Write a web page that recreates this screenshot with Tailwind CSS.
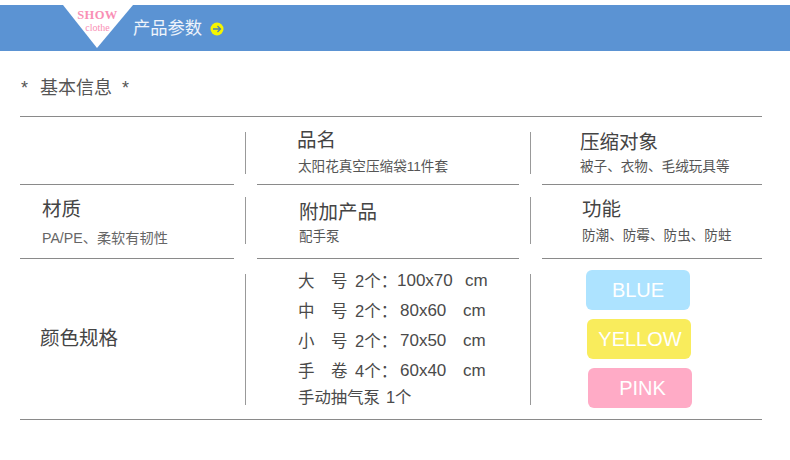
<!DOCTYPE html>
<html lang="zh-CN">
<head>
  <meta charset="UTF-8" />
  <meta name="viewport" content="width=device-width, initial-scale=1.0" />
  <title>产品参数</title>
  <script src="https://cdn.jsdelivr.net/npm/@tailwindcss/browser@4"></script>
</head>
<body class="bg-white text-[#444] overflow-hidden font-['Liberation_Sans','Noto_Sans_CJK_SC',sans-serif]">

  <!-- Header band -->
  <header class="relative mt-[5px] h-[46px] bg-[#5b93d3] flex items-center pl-[133px] gap-[8px]">
    <div class="absolute left-[63px] top-0 w-[70px] h-[44px]">
      <svg class="absolute inset-0" width="70" height="44" viewBox="0 0 70 44"><polygon points="0,0 70,0 34,43" fill="#fff" /></svg>
      <div class="relative text-center pr-[1px] font-['Liberation_Serif',serif] text-[#f98fb5] leading-none">
        <div class="pt-[4px] text-[12.5px] font-bold tracking-[0.4px]">SHOW</div>
        <div class="mt-[1px] text-[10px]">clothe</div>
      </div>
    </div>
    <span class="pt-[2px] text-[17.3px] leading-none text-white/90">产品参数</span>
    <svg class="mt-[1px]" width="14" height="14" viewBox="0 0 14 14">
      <circle cx="7" cy="7" r="6.5" fill="#f5f500" />
      <path d="M3 7h7.5M7.5 4l3 3-3 3" fill="none" stroke="#4f7fb0" stroke-width="1.3" />
    </svg>
  </header>

  <!-- Section title -->
  <h1 class="h-[65px] pl-[21px] pt-[26px] flex text-[18px] leading-[22px] font-normal text-[#555]">
    <span class="w-[19px]">*</span><span class="w-[82px]">基本信息</span><span>*</span>
  </h1>

  <main class="ml-[20px] w-[742px]">
    <div class="h-px bg-[#8a8a8a]"></div>

    <!-- Row 1 -->
    <div class="flex h-[67px] pt-[15px]">
      <div class="w-[225px]"></div>
      <div class="w-px h-[42px] bg-[#999]"></div>
      <div class="w-[284px] pl-[52px]">
        <div class="-ml-[1px] text-[19.5px] leading-[16px]">品名</div>
        <div class="mt-[10px] text-[13.6px] leading-[18px] text-[#555]">太阳花真空压缩袋11件套</div>
      </div>
      <div class="w-px h-[42px] bg-[#999]"></div>
      <div class="pl-[49px]">
        <div class="text-[19.5px] leading-[20px]">压缩对象</div>
        <div class="mt-[6px] text-[13.6px] leading-[18px] text-[#555]">被子、衣物、毛绒玩具等</div>
      </div>
    </div>
    <div class="flex justify-between h-px">
      <div class="w-[214px] bg-[#8a8a8a]"></div>
      <div class="w-[262px] bg-[#8a8a8a]"></div>
      <div class="w-[220px] bg-[#8a8a8a]"></div>
    </div>

    <!-- Row 2 -->
    <div class="flex h-[73px] pt-[12px]">
      <div class="w-[225px] pl-[22px]">
        <div class="text-[19.5px] leading-[24px]">材质</div>
        <div class="mt-[8px] text-[14.2px] leading-[18px] text-[#666]">PA/PE、柔软有韧性</div>
      </div>
      <div class="w-px h-[47px] bg-[#999]"></div>
      <div class="w-[284px] pl-[53px]">
        <div class="text-[19.5px] leading-[24px] pt-[3px]">附加产品</div>
        <div class="mt-[4px] text-[13.5px] leading-[18px] text-[#555]">配手泵</div>
      </div>
      <div class="w-px h-[47px] bg-[#999]"></div>
      <div class="pl-[51px]">
        <div class="text-[19.5px] leading-[24px]">功能</div>
        <div class="mt-[6px] text-[13.6px] leading-[18px] text-[#555]">防潮、防霉、防虫、防蛀</div>
      </div>
    </div>
    <div class="flex justify-between h-px">
      <div class="w-[214px] bg-[#8a8a8a]"></div>
      <div class="w-[262px] bg-[#8a8a8a]"></div>
      <div class="w-[220px] bg-[#8a8a8a]"></div>
    </div>

    <!-- Row 3 -->
    <div class="flex h-[160px] pt-[15px]">
      <div class="w-[225px] pl-[20px] pt-[51px] text-[19.5px] leading-[26px]">颜色规格</div>
      <div class="w-px h-[131px] bg-[#999]"></div>
      <div class="w-[284px] pl-[52px] text-[16.5px] text-[#4a4a4a] whitespace-nowrap">
        <div class="flex h-[30px] items-center -mt-[8px]"><span class="w-[33px]">大</span><span class="w-[24px]">号</span><span class="w-[42px]">2个：</span><span class="w-[68px] text-[17px]">100x70</span><span class="text-[17px]">cm</span></div>
        <div class="flex h-[30px] items-center"><span class="w-[33px]">中</span><span class="w-[24px]">号</span><span class="w-[45px]">2个：</span><span class="w-[63px] text-[17px]">80x60</span><span class="text-[17px]">cm</span></div>
        <div class="flex h-[30px] items-center"><span class="w-[33px]">小</span><span class="w-[24px]">号</span><span class="w-[45px]">2个：</span><span class="w-[63px] text-[17px]">70x50</span><span class="text-[17px]">cm</span></div>
        <div class="flex h-[30px] items-center"><span class="w-[33px]">手</span><span class="w-[24px]">卷</span><span class="w-[45px]">4个：</span><span class="w-[63px] text-[17px]">60x40</span><span class="text-[17px]">cm</span></div>
        <div class="flex h-[22px] items-center text-[16.4px] gap-[6px]"><span>手动抽气泵</span><span>1个</span></div>
      </div>
      <div class="w-px h-[131px] bg-[#999]"></div>
      <div class="pl-[55px] -mt-[4px] flex flex-col gap-[9px] text-white text-[20px]">
        <div class="w-[104px] h-[40px] rounded-[6px] bg-[#ade3ff] flex items-center justify-center">BLUE</div>
        <div class="ml-[1px] pl-[2px] w-[104px] h-[40px] rounded-[6px] bg-[#f9ec5c] flex items-center justify-center">YELLOW</div>
        <div class="ml-[2px] pl-[5px] w-[104px] h-[40px] rounded-[6px] bg-[#ffabc6] flex items-center justify-center">PINK</div>
      </div>
    </div>
    <div class="h-px bg-[#8a8a8a]"></div>
  </main>
</body>
</html>
